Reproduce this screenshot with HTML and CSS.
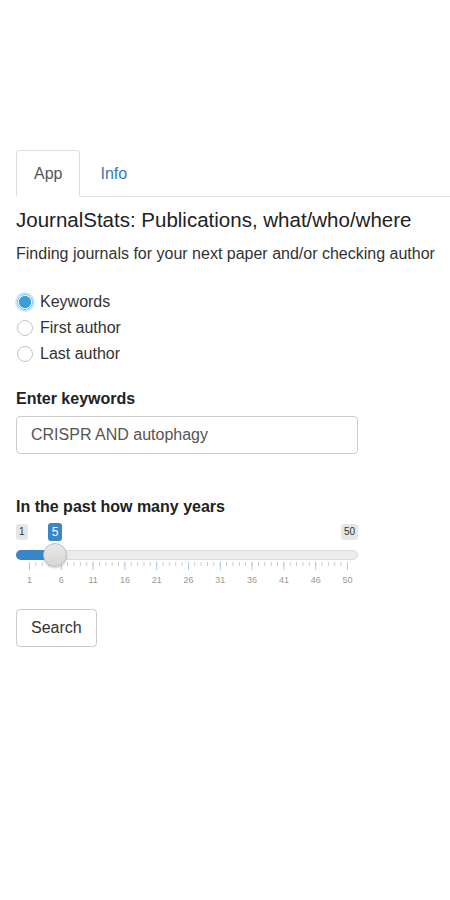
FILE: index.html
```html
<!DOCTYPE html>
<html lang="en">
<head>
  <meta charset="UTF-8" />
  <title>JournalStats</title>
  <link rel="stylesheet" href="styles.css">
</head>
<body>
  <ul class="nav-tabs">
    <li><a class="active" href="#app">App</a></li>
    <li><a href="#info">Info</a></li>
  </ul>

  <h2 class="title">JournalStats: Publications, what/who/where</h2>
  <p class="lead">Finding journals for your next paper and/or checking author</p>

  <div class="radios">
    <label class="radio"><input type="radio" name="mode" value="kw" checked /> Keywords</label>
    <label class="radio"><input type="radio" name="mode" value="first" /> First author</label>
    <label class="radio"><input type="radio" name="mode" value="last" /> Last author</label>
  </div>

  <label class="field-label" for="keywords">Enter keywords</label>
  <input class="text-input" type="text" id="keywords" value="CRISPR AND autophagy" />

  <label class="field-label years-label">In the past how many years</label>
  <div class="irs">
    <div class="irs-top">
      <span class="irs-minmax">1</span>
      <span class="irs-minmax">50</span>
    </div>
    <span class="irs-single">5</span>
    <div class="irs-line">
      <span class="irs-bar"></span>
      <span class="irs-handle"></span>
    </div>
    <div class="irs-grid"></div>
    <div class="irs-labels">
      <span>1</span><span>6</span><span>11</span><span>16</span><span>21</span><span>26</span>
      <span>31</span><span>36</span><span>41</span><span>46</span><span>50</span>
    </div>
  </div>

  <button class="btn">Search</button>
</body>
</html>
```

FILE: styles.css
```css
html, body {
  overflow: hidden;
}
body {
  margin: 0;
  padding: 150px 16px 0;
  font-family: "Liberation Sans", Arial, sans-serif;
  font-size: 16px;
  color: #333;
  background: #fff;
}
.nav-tabs {
  display: flex;
  list-style: none;
  margin: 0 -16px 0 0;
  padding: 0;
  border-bottom: 1px solid #ddd;
}
.nav-tabs li {
  margin-bottom: -1px;
}
.nav-tabs a {
  display: block;
  padding: 11px 17px;
  margin-right: 2px;
  line-height: 23px;
  border: 1px solid transparent;
  border-radius: 4px 4px 0 0;
  color: #337ab7;
  text-decoration: none;
}
.nav-tabs a.active {
  color: #555;
  border-color: #ddd;
  border-bottom-color: #fff;
  background: #fff;
}
.title {
  margin: 12px 0 0;
  font-size: 20.5px;
  font-weight: normal;
  line-height: 22.5px;
  color: #222;
}
.lead {
  margin: 10px 0 0;
  line-height: 23px;
  white-space: nowrap;
}
.radios {
  margin-top: 24.5px;
}
.radio {
  display: flex;
  align-items: center;
  height: 26px;
  gap: 7px;
}
.radio input {
  appearance: none;
  margin: 0 0 0 1px;
  width: 16px;
  height: 16px;
  border: 1px solid #c4c4c4;
  border-radius: 50%;
  background: #fff;
}
.radio input:checked {
  border-color: #7bbbe6;
  background: radial-gradient(circle, #3c9ed9 0, #3c9ed9 58%, #fff 64%);
  box-shadow: 0 0 0 2px #cfe7f7;
}
.field-label {
  display: block;
  margin-top: 19.5px;
  line-height: 23px;
  font-weight: bold;
  color: #222;
}
.text-input {
  display: block;
  box-sizing: border-box;
  margin-top: 6.5px;
  width: 342px;
  height: 38px;
  padding: 0 14px;
  border: 1px solid #ccc;
  border-radius: 4px;
  font: inherit;
  color: #555;
}
.years-label {
  margin-top: 40.5px;
}
.irs {
  position: relative;
  width: 342px;
  margin-top: 6.5px;
}
.irs-top {
  display: flex;
  justify-content: space-between;
  height: 16px;
}
.irs-minmax {
  padding: 0 3px;
  font-size: 10px;
  line-height: 16px;
  color: #333;
  background: #e6e6e6;
  border-radius: 3px;
}
.irs-single {
  position: absolute;
  top: -1px;
  left: 32px;
  width: 14px;
  height: 18px;
  font-size: 12px;
  line-height: 18px;
  text-align: center;
  color: #fff;
  background: #3a86c8;
  border-radius: 3px;
}
.irs-line {
  position: relative;
  box-sizing: border-box;
  margin-top: 10px;
  height: 10px;
  background: #ededed;
  border: 1px solid #dcdcdc;
  border-radius: 5px;
}
.irs-bar {
  position: absolute;
  top: -1px;
  left: -1px;
  width: 40px;
  height: 10px;
  background: #3a86c8;
  border-radius: 5px 0 0 5px;
}
.irs-handle {
  position: absolute;
  top: -8px;
  left: 26px;
  width: 24px;
  height: 24px;
  box-sizing: border-box;
  border: 1px solid #bdbdbd;
  border-radius: 50%;
  background: linear-gradient(#e8e8e8, #d6d6d6);
  box-shadow: 0 1px 2px rgba(0, 0, 0, 0.2);
}
.irs-grid {
  margin: 2px 0 0 13px;
  width: 319px;
  height: 10px;
  background:
    linear-gradient(to right, #a9c9e6 1px, transparent 1px) 0 0 / 31.8px 8px repeat-x,
    linear-gradient(to right, #c8c8c8 1px, transparent 1px) 0 0 / 6.36px 4px repeat-x;
}
.irs-labels {
  display: flex;
  justify-content: space-between;
  margin-left: 13.5px;
  width: 318px;
  height: 16px;
  font-size: 9px;
  line-height: 16px;
  color: #999;
}
.irs-labels span {
  display: flex;
  justify-content: center;
  width: 0;
}
.btn {
  display: block;
  margin-top: 21px;
  height: 38px;
  padding: 0 14px;
  font: inherit;
  color: #333;
  background: #fff;
  border: 1px solid #ccc;
  border-radius: 4px;
}
```
